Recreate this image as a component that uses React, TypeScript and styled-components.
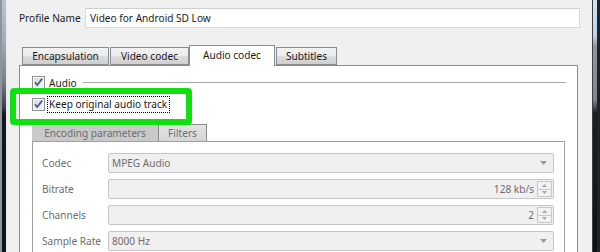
import React from 'react';
import styled, { createGlobalStyle } from 'styled-components';

const GlobalStyle = createGlobalStyle`
  html, body {
    margin: 0;
    padding: 0;
  }
  body {
    width: 600px;
    height: 252px;
    overflow: hidden;
    background: #f0f0f0;
    font-family: "Noto Sans", "Liberation Sans", sans-serif;
    font-size: 10.1px;
    color: #1a1a1a;
  }
  * {
    box-sizing: border-box;
  }
`;

const Window = styled.div`
  display: flex;
  width: 600px;
  height: 252px;
  overflow: hidden;
`;

const LeftFrame = styled.div`
  flex: none;
  width: 7px;
  background:
    linear-gradient(to right, #8d949b 0 2px, transparent 2px 6px, #e6eaee 6px),
    linear-gradient(to bottom, #b9c3cd 0, #a7b1bb 36px, #7b838b 80px, #3a3f45 108px, #15191d 114px, #101317 100%);
`;

const RightFrame = styled.div`
  flex: none;
  width: 8px;
  background:
    linear-gradient(to right, #3c4046 0 1px, transparent 1px 5px, #1f2327 5px),
    linear-gradient(to bottom, #d3e4f4 0, #bcd2e8 36px, #8d989f 46px, #7d858c 100px, #1b1f23 113px, #0e1114 100%);
`;

const Content = styled.div`
  position: relative;
  flex: 1;
  min-width: 0;
  display: flex;
  flex-direction: column;
  padding: 8px 12px 0 12px;
`;

const ProfileRow = styled.div`
  display: flex;
  align-items: center;
  height: 20px;
`;

const ProfileLabel = styled.div`
  width: 66px;
  flex: none;
`;

const TextInput = styled.div`
  flex: 1;
  min-width: 0;
  height: 20px;
  background: #fff;
  border: 1px solid #d9d9d9;
  border-top-color: #cfcfcf;
  border-radius: 1px;
  padding: 0 4px;
  display: flex;
  align-items: center;
`;

const Spacer = styled.div<{ $h: number }>`
  flex: none;
  height: ${p => p.$h}px;
`;

const TabBar = styled.div<{ $indent: number }>`
  display: flex;
  align-items: flex-end;
  padding-left: ${p => p.$indent}px;
  height: 20px;
`;

const Tab = styled.div<{ $w: number; $active?: boolean }>`
  position: relative;
  flex: none;
  width: ${p => p.$w}px;
  height: ${p => (p.$active ? 21 : 18)}px;
  margin-bottom: ${p => (p.$active ? -1 : 0)}px;
  margin-right: 1px;
  margin-left: ${p => (p.$active ? -1 : 0)}px;
  z-index: ${p => (p.$active ? 2 : 1)};
  border: 1px solid #898c95;
  border-bottom: ${p => (p.$active ? 'none' : '1px solid #898c95')};
  background: ${p => (p.$active ? '#fff' : 'linear-gradient(to bottom, #f2f2f2, #ebebeb 50%, #dddddd 51%, #cfcfcf)')};
  display: flex;
  align-items: center;
  justify-content: center;
  padding-bottom: ${p => (p.$active ? 3 : 1)}px;
  white-space: nowrap;
`;

const Pane = styled.div`
  flex: 1;
  min-width: 0;
  margin-right: 2px;
  background: #fff;
  border: 1px solid #898c95;
  border-bottom: none;
  padding: 10px 12px 0 12px;
  display: flex;
  flex-direction: column;
`;

const CheckRow = styled.div`
  display: flex;
  align-items: center;
  height: 13px;
  gap: 4px;
`;

const GroupLine = styled.div`
  flex: 1;
  height: 1px;
  background: #a9a9a9;
  margin-left: 2px;
  margin-right: -1px;
`;

const FocusText = styled.span`
  border: 1px dotted #000;
  padding: 1px 2px 2px 1px;
  margin-left: -2px;
  line-height: 12px;
`;

const InnerGroup = styled.div`
  flex: 1;
  display: flex;
  flex-direction: column;
  margin-top: 13px;
`;

const InnerTabBar = styled.div`
  display: flex;
  align-items: flex-end;
  height: 17px;
`;

const InnerTab = styled.div<{ $w: number; $active?: boolean }>`
  flex: none;
  width: ${p => p.$w}px;
  height: ${p => (p.$active ? 16 : 17)}px;
  background: ${p => (p.$active ? '#c9c9c9' : 'linear-gradient(to bottom, #e3e3e3, #d6d6d6)')};
  border: ${p => (p.$active ? 'none' : '1px solid #8a8a8a')};
  border-bottom: none;
  color: #6d6d6d;
  display: flex;
  align-items: center;
  justify-content: center;
  white-space: nowrap;
`;

const InnerPane = styled.div`
  flex: 1;
  border-top: 1px solid #a0a0a0;
  border-left: 1px solid #a0a0a0;
  border-right: 1px solid #a0a0a0;
  padding: 11px 10px 0 9px;
  display: flex;
  flex-direction: column;
  gap: 6px;
`;

const FieldRow = styled.div`
  display: flex;
  align-items: center;
  height: 20px;
`;

const FieldLabel = styled.div`
  width: 66px;
  flex: none;
  color: #6d6d6d;
`;

const Field = styled.div<{ $align?: 'left' | 'right' }>`
  flex: 1;
  min-width: 0;
  height: 20px;
  background: #f0f0f0;
  border: 1px solid #c5c5c5;
  border-radius: 2px;
  color: #6d6d6d;
  display: flex;
  align-items: center;
  justify-content: ${p => (p.$align === 'right' ? 'flex-end' : 'space-between')};
  padding: ${p => (p.$align === 'right' ? '0 1px 0 3px' : '0 6px 0 3px')};
`;

const SpinBox = styled.div`
  display: flex;
  flex-direction: column;
  width: 15px;
  height: 16px;
  margin-left: 3px;
`;

const SpinHalf = styled.div`
  flex: 1;
  border: 1px solid #c9c9c9;
  background: #f2f2f2;
  display: flex;
  align-items: center;
  justify-content: center;
  & + & {
    border-top: none;
  }
`;

const Highlight = styled.div`
  position: absolute;
  left: 3px;
  top: 88px;
  width: 182px;
  height: 37px;
  border: 6px solid #10e010;
  border-radius: 4px;
  pointer-events: none;
`;

function CheckBox() {
  return (
    <svg width="13" height="13" viewBox="0 0 13 13" style={{ flex: 'none' }}>
      <defs>
        <linearGradient id="cbg" x1="0" y1="0" x2="1" y2="1">
          <stop offset="0" stopColor="#d6d9de" />
          <stop offset="1" stopColor="#f6f6f6" />
        </linearGradient>
      </defs>
      <rect x="0.5" y="0.5" width="12" height="12" fill="#fff" stroke="#8f8f8f" />
      <rect x="2" y="2" width="9" height="9" fill="url(#cbg)" />
      <path d="M3 6.2 L5.2 9 L10.2 2.6" fill="none" stroke="#4a5f92" strokeWidth="1.8" />
    </svg>
  );
}

function DropArrow() {
  return (
    <svg width="7" height="4" viewBox="0 0 7 4">
      <path d="M0 0 H7 L3.5 4 Z" fill="#9a9a9a" />
    </svg>
  );
}

function Spinner() {
  return (
    <SpinBox>
      <SpinHalf>
        <svg width="5" height="3" viewBox="0 0 5 3"><path d="M0 3 H5 L2.5 0 Z" fill="#a8a8a8" /></svg>
      </SpinHalf>
      <SpinHalf>
        <svg width="5" height="3" viewBox="0 0 5 3"><path d="M0 0 H5 L2.5 3 Z" fill="#a8a8a8" /></svg>
      </SpinHalf>
    </SpinBox>
  );
}

export default function App() {
  return (
    <>
      <GlobalStyle />
      <Window>
        <LeftFrame />
        <Content>
          <ProfileRow>
            <ProfileLabel>Profile Name</ProfileLabel>
            <TextInput>Video for Android SD Low</TextInput>
          </ProfileRow>
          <Spacer $h={17} />
          <TabBar $indent={3}>
            <Tab $w={87}>Encapsulation</Tab>
            <Tab $w={79}>Video codec</Tab>
            <Tab $w={86} $active>Audio codec</Tab>
            <Tab $w={61}>Subtitles</Tab>
          </TabBar>
          <Pane>
            <CheckRow>
              <CheckBox />
              <span>Audio</span>
              <GroupLine />
            </CheckRow>
            <Spacer $h={9} />
            <CheckRow>
              <CheckBox />
              <FocusText>Keep original audio track</FocusText>
            </CheckRow>
            <InnerGroup>
              <InnerTabBar>
                <InnerTab $w={126} $active>Encoding parameters</InnerTab>
                <InnerTab $w={49}>Filters</InnerTab>
              </InnerTabBar>
              <InnerPane>
                <FieldRow>
                  <FieldLabel>Codec</FieldLabel>
                  <Field>
                    <span>MPEG Audio</span>
                    <DropArrow />
                  </Field>
                </FieldRow>
                <FieldRow>
                  <FieldLabel>Bitrate</FieldLabel>
                  <Field $align="right">
                    <span>128 kb/s</span>
                    <Spinner />
                  </Field>
                </FieldRow>
                <FieldRow>
                  <FieldLabel>Channels</FieldLabel>
                  <Field $align="right">
                    <span>2</span>
                    <Spinner />
                  </Field>
                </FieldRow>
                <FieldRow>
                  <FieldLabel>Sample Rate</FieldLabel>
                  <Field>
                    <span>8000 Hz</span>
                    <DropArrow />
                  </Field>
                </FieldRow>
              </InnerPane>
            </InnerGroup>
          </Pane>
          <Highlight />
        </Content>
        <RightFrame />
      </Window>
    </>
  );
}
